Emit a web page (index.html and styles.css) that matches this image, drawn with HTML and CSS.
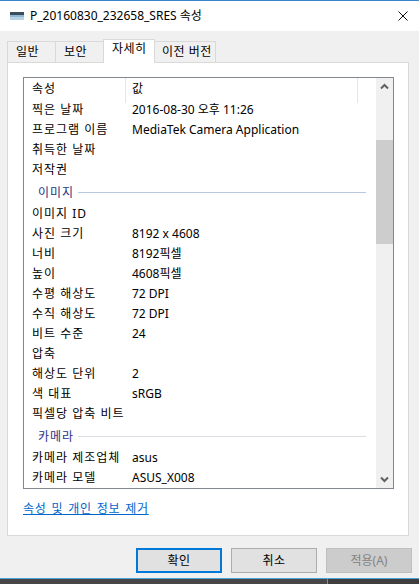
FILE: index.html
```html
<!DOCTYPE html>
<html lang="ko">
<head>
<meta charset="utf-8">
<title>P_20160830_232658_SRES 속성</title>
<link rel="stylesheet" href="styles.css">
</head>
<body>
<div class="window">
  <div class="titlebar">
    <svg class="app-icon" width="14" height="8" viewBox="0 0 14 8">
      <rect x="0" y="0" width="14" height="8" fill="#5d7b93"/>
      <rect x="0" y="0" width="14" height="3" fill="#3b4d5c"/>
      <rect x="0" y="3" width="14" height="2" fill="#8fb6d3"/>
      <rect x="0" y="5" width="14" height="3" fill="#b9d3e6"/>
    </svg>
    <span class="title">P_20160830_232658_SRES 속성</span>
    <svg class="close" width="10" height="10" viewBox="0 0 10 10">
      <path d="M0.5 0.5 L9.5 9.5 M9.5 0.5 L0.5 9.5" stroke="#111" stroke-width="1"/>
    </svg>
  </div>
  <div class="main">
    <div class="tabs">
      <div class="tab t1">일반</div>
      <div class="tab t2">보안</div>
      <div class="tab active">자세히</div>
      <div class="tab t4">이전 버전</div>
    </div>
    <div class="panel">
      <div class="listbox">
        <div class="list">
          <div class="head">
            <div class="hcell hprop">속성</div>
            <div class="hcell hval">값</div>
          </div>
          <div class="row"><span>찍은 날짜</span><span>2016-08-30 오후 11:26</span></div>
          <div class="row"><span>프로그램 이름</span><span>MediaTek Camera Application</span></div>
          <div class="row"><span>취득한 날짜</span><span></span></div>
          <div class="row"><span>저작권</span><span></span></div>
          <div class="group"><span>이미지</span><i class="gline blue"></i></div>
          <div class="row"><span>이미지 ID</span><span></span></div>
          <div class="row"><span>사진 크기</span><span>8192 x 4608</span></div>
          <div class="row"><span>너비</span><span>8192픽셀</span></div>
          <div class="row"><span>높이</span><span>4608픽셀</span></div>
          <div class="row"><span>수평 해상도</span><span>72 DPI</span></div>
          <div class="row"><span>수직 해상도</span><span>72 DPI</span></div>
          <div class="row"><span>비트 수준</span><span>24</span></div>
          <div class="row"><span>압축</span><span></span></div>
          <div class="row"><span>해상도 단위</span><span>2</span></div>
          <div class="row"><span>색 대표</span><span>sRGB</span></div>
          <div class="row"><span>픽셀당 압축 비트</span><span></span></div>
          <div class="group"><span>카메라</span><i class="gline gray"></i></div>
          <div class="row"><span>카메라 제조업체</span><span>asus</span></div>
          <div class="row"><span>카메라 모델</span><span>ASUS_X008</span></div>
        </div>
        <div class="scrollbar">
          <div class="sbtn">
            <svg width="17" height="17" viewBox="0 0 17 17"><polyline points="5,10.5 8.5,7 12,10.5" fill="none" stroke="#606060" stroke-width="2"/></svg>
          </div>
          <div class="thumb"></div>
          <div class="sbtn down">
            <svg width="17" height="17" viewBox="0 0 17 17"><polyline points="5,6.5 8.5,10 12,6.5" fill="none" stroke="#606060" stroke-width="2"/></svg>
          </div>
        </div>
      </div>
      <a class="link" href="#">속성 및 개인 정보 제거</a>
    </div>
    <div class="buttons">
      <div class="btn default">확인</div>
      <div class="btn">취소</div>
      <div class="btn disabled">적용(A)</div>
    </div>
  </div>
  <div class="bottom"></div>
</div>
</body>
</html>
```

FILE: styles.css
```css
* { box-sizing: border-box; }
html, body {
  margin: 0;
  padding: 0;
  width: 419px;
  height: 584px;
  overflow: hidden;
  background: #f0f0f0;
  font-family: "Noto Sans", "Noto Sans CJK KR", sans-serif;
  font-size: 12px;
  color: #000;
}
.window {
  display: flex;
  flex-direction: column;
  height: 584px;
}
.titlebar {
  height: 31px;
  flex: none;
  border-top: 1px solid #3a84cc;
  background: #fff;
  display: flex;
  align-items: center;
}
.app-icon { margin-left: 10px; margin-top: -1px; }
.title {
  margin-left: 6px;
  font-size: 12px;
  line-height: 16px;
  margin-top: -1px;
}
.close { margin-left: auto; margin-right: 11px; margin-top: -1px; }
.main {
  flex: 1;
  padding: 8px 10px 0 7px;
  display: flex;
  flex-direction: column;
}
.tabs {
  display: flex;
  align-items: flex-end;
  height: 23px;
  position: relative;
  z-index: 2;
}
.tab {
  height: 21px;
  border: 1px solid #d9d9d9;
  border-bottom: none;
  background: #f0f0f0;
  padding-left: 8px;
  line-height: 19px;
  margin-left: -1px;
  letter-spacing: 0.5px;
}
.t1 { width: 49px; margin-left: 0; }
.t2 { width: 49px; }
.t4 { width: 62px; padding-left: 7px; }
.tab.active {
  width: 52px;
  height: 24px;
  margin-bottom: -1px;
  background: #fff;
  padding-left: 8px;
  line-height: 18px;
  position: relative;
  z-index: 3;
}
.panel {
  height: 474px;
  width: 402px;
  background: #fff;
  border: 1px solid #d9d9d9;
  padding: 14px 0 0 15px;
  position: relative;
  z-index: 1;
}
.listbox {
  width: 371px;
  height: 412px;
  border: 1px solid #828790;
  display: flex;
}
.list {
  flex: 1;
  overflow: hidden;
}
.head {
  height: 22px;
  display: flex;
}
.hcell {
  line-height: 22px;
  height: 25px;
  border-right: 1px solid #e5e5e5;
}
.hprop { width: 102px; padding-left: 8px; letter-spacing: 1px; }
.hval { width: 232px; padding-left: 6px; }
.row {
  display: grid;
  grid-template-columns: 108px 1fr;
  height: 20px;
  line-height: 20px;
  white-space: nowrap;
}
.row span:first-child { padding-left: 8px; letter-spacing: 1px; }
.group {
  height: 24px;
  display: flex;
  align-items: center;
  padding-left: 14px;
  color: #1e3287;
  letter-spacing: 1px;
}
.gline {
  flex: 1;
  height: 1px;
  margin-left: 4px;
  margin-right: 10px;
}
.gline.blue { background: #b9c8e0; }
.gline.gray { background: #dcdce2; }
.scrollbar {
  width: 17px;
  flex: none;
  background: #f0f0f0;
  display: flex;
  flex-direction: column;
}
.sbtn { height: 17px; }
.sbtn svg { display: block; }
.thumb {
  margin-top: 45px;
  height: 104px;
  background: #cdcdcd;
}
.sbtn.down { margin-top: auto; }
.link {
  display: inline-block;
  margin-top: 12px;
  margin-left: 0;
  color: #0066cc;
  line-height: 16px;
  text-decoration: underline;
  letter-spacing: 0.6px;
  word-spacing: 1.5px;
}
.buttons {
  margin-top: 12px;
  display: flex;
  justify-content: flex-end;
  gap: 9px;
  margin-right: -3px;
}
.btn {
  width: 86px;
  height: 25px;
  background: #e1e1e1;
  border: 1px solid #adadad;
  text-align: center;
  line-height: 23px;
  letter-spacing: 0.5px;
}
.btn.default {
  border: 2px solid #0078d7;
  line-height: 21px;
}
.btn.disabled {
  background: #cccccc;
  border-color: #bfbfbf;
  color: #838383;
  letter-spacing: 0;
}
.bottom {
  height: 6px;
  flex: none;
  border-top: 1px solid #4aa3dc;
  background: linear-gradient(to right, #474747 0, #474747 327px, #8a8a8a 327px, #8a8a8a 328px, #3e3e3e 328px);
}
```
